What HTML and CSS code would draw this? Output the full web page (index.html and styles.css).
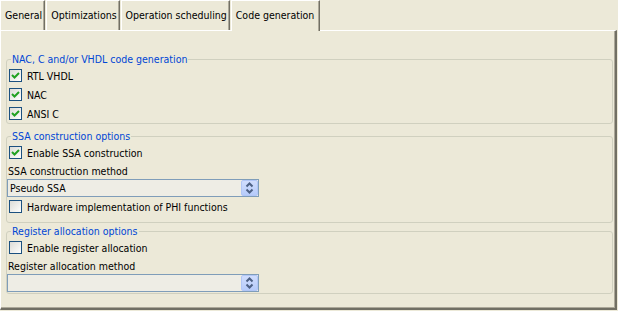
FILE: index.html
```html
<!DOCTYPE html>
<html>
<head>
<meta charset="utf-8">
<link rel="stylesheet" href="styles.css">
</head>
<body>
<div class="tabs">
  <div class="tab">General</div>
  <div class="tab">Optimizations</div>
  <div class="tab">Operation scheduling</div>
  <div class="tab selected">Code generation</div>
</div>
<div class="panel">
  <div class="group g1">
    <div class="legend">NAC, C and/or VHDL code generation</div>
    <div class="row"><span class="cb checked"><svg width="11" height="11" viewBox="0 0 11 11"><path d="M2 5 L4.5 7.5 L9 3" fill="none" stroke="#21a121" stroke-width="2"/></svg></span>RTL VHDL</div>
    <div class="row"><span class="cb checked"><svg width="11" height="11" viewBox="0 0 11 11"><path d="M2 5 L4.5 7.5 L9 3" fill="none" stroke="#21a121" stroke-width="2"/></svg></span>NAC</div>
    <div class="row"><span class="cb checked"><svg width="11" height="11" viewBox="0 0 11 11"><path d="M2 5 L4.5 7.5 L9 3" fill="none" stroke="#21a121" stroke-width="2"/></svg></span>ANSI C</div>
  </div>
  <div class="group g2">
    <div class="legend">SSA construction options</div>
    <div class="row"><span class="cb checked"><svg width="11" height="11" viewBox="0 0 11 11"><path d="M2 5 L4.5 7.5 L9 3" fill="none" stroke="#21a121" stroke-width="2"/></svg></span>Enable SSA construction</div>
    <div class="label">SSA construction method</div>
    <div class="combo"><span class="value">Pseudo SSA</span><span class="spin"><svg width="15" height="14" viewBox="0 0 15 14"><path d="M4.5 5.5 L7.5 2.5 L10.5 5.5" fill="none" stroke="#4d6185" stroke-width="2"/><path d="M4.5 8.5 L7.5 11.5 L10.5 8.5" fill="none" stroke="#4d6185" stroke-width="2"/></svg></span></div>
    <div class="row"><span class="cb"></span>Hardware implementation of PHI functions</div>
  </div>
  <div class="group g3">
    <div class="legend">Register allocation options</div>
    <div class="row"><span class="cb"></span>Enable register allocation</div>
    <div class="label">Register allocation method</div>
    <div class="combo"><span class="value"></span><span class="spin"><svg width="15" height="14" viewBox="0 0 15 14"><path d="M4.5 5.5 L7.5 2.5 L10.5 5.5" fill="none" stroke="#4d6185" stroke-width="2"/><path d="M4.5 8.5 L7.5 11.5 L10.5 8.5" fill="none" stroke="#4d6185" stroke-width="2"/></svg></span></div>
  </div>
</div>
</body>
</html>
```
FILE: styles.css
```css
html, body {
  margin: 0;
  padding: 0;
  background: #ece9d8;
}
body {
  width: 618px;
  height: 311px;
  overflow: hidden;
  font-family: "DejaVu Sans Condensed", "DejaVu Sans", sans-serif;
  font-size: 10.5px;
  color: #000;
}
.tabs {
  display: flex;
  height: 30px;
  align-items: flex-end;
}
.tab {
  box-sizing: border-box;
  height: 30px;
  padding: 0 2px 1px 4px;
  margin-right: 1px;
  border-top: 1px solid #fff;
  border-left: 1px solid #fff;
  border-right: 1px solid #716f64;
  box-shadow: inset -1px 0 #aca899;
  display: flex;
  align-items: center;
  white-space: nowrap;
}
.tab.selected {
  height: 31px;
  margin-bottom: -1px;
  position: relative;
  z-index: 1;
  background: #ece9d8;
  padding: 0 5px 2px 4px;
}
.panel {
  box-sizing: border-box;
  width: 617px;
  height: 280px;
  border-top: 1px solid #fff;
  border-left: 1px solid #fff;
  border-right: 2px solid #716f64;
  border-bottom: 2px solid #716f64;
  box-shadow: inset -1px -1px #aca899;
  padding: 0 2px 0 5px;
}
.group {
  border: 1px solid #d0d0bf;
  border-radius: 3px;
  padding: 0;
}
.g1 { margin-top: 28px; }
.g2 { margin-top: 12px; padding-bottom: 6px; }
.g3 { margin-top: 8px; padding-bottom: 1px; }
.legend {
  display: block;
  width: max-content;
  margin: -7px 0 0 4px;
  padding: 0 1px;
  line-height: 13px;
  height: 13px;
  background: #ece9d8;
  color: #0046d5;
}
.row {
  height: 19px;
  display: flex;
  align-items: center;
  padding-left: 2px;
  white-space: nowrap;
}
.cb {
  box-sizing: border-box;
  width: 13px;
  height: 13px;
  border: 1px solid #1c5180;
  background: linear-gradient(135deg, #dcdcd7 0%, #f4f4f1 70%, #fff 100%);
  margin-right: 5px;
  display: flex;
  align-items: center;
  justify-content: center;
}
.label {
  height: 17px;
  line-height: 19px;
  padding-left: 1px;
}
.combo {
  box-sizing: border-box;
  width: 252px;
  height: 18px;
  border: 1px solid #7f9db9;
  background: #eeede5;
  display: flex;
  align-items: center;
  justify-content: space-between;
}
.combo .value {
  padding-left: 2px;
}
.spin {
  box-sizing: border-box;
  width: 17px;
  height: 16px;
  background: linear-gradient(#d0ddfd, #b6cbfa);
  border: 1px solid #b1c6f6;
  border-radius: 2px;
  display: flex;
  align-items: center;
  justify-content: center;
}
```
